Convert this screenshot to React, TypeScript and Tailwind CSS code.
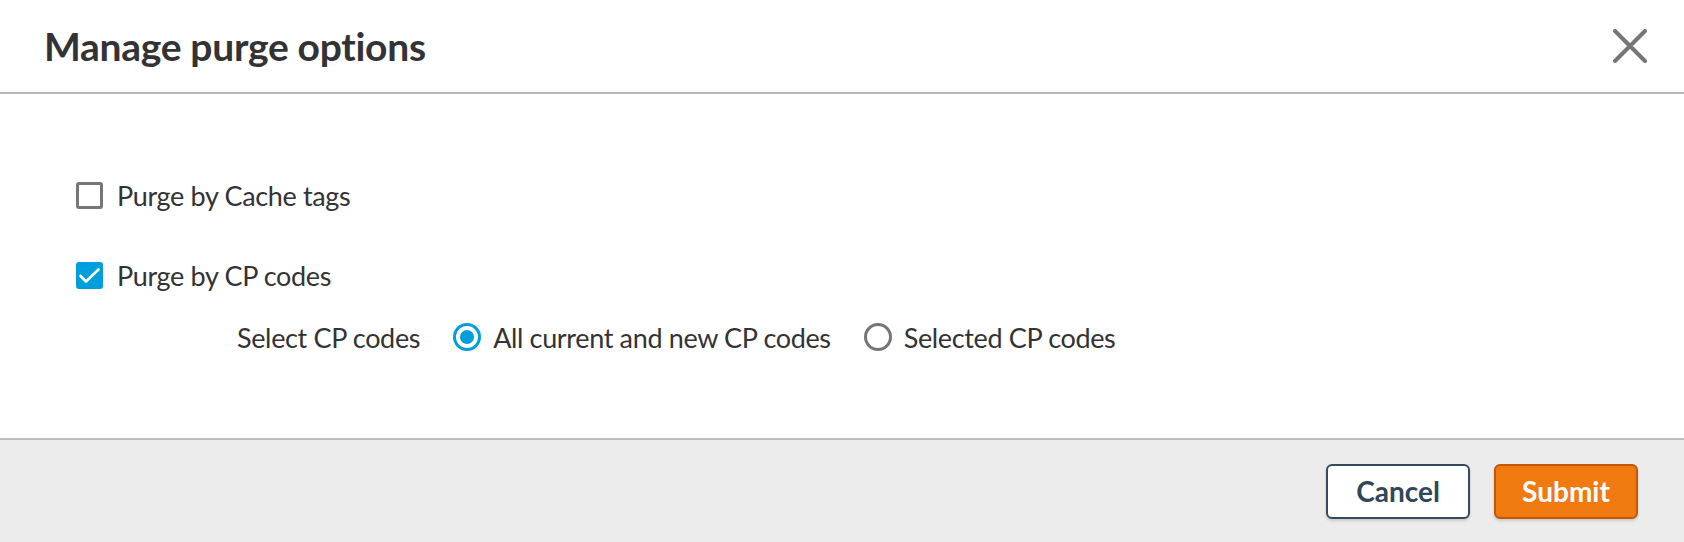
import React from "react";

const font = { fontFamily: '"Lato", "Open Sans", sans-serif' };

function CheckBox({ checked }: { checked: boolean }) {
  if (checked) {
    return (
      <span className="block h-[27px] w-[27px] rounded-[3px] bg-[#009fdb]">
        <svg width="27" height="27" viewBox="0 0 27 27" fill="none">
          <path d="M4.5 14 L10 19.5 L22.5 7.5" stroke="white" strokeWidth="2.6" strokeLinecap="round" strokeLinejoin="round" />
        </svg>
      </span>
    );
  }
  return <span className="block h-[27px] w-[27px] rounded-[3px] border-[3px] border-[#767676] bg-white" />;
}

function Radio({ checked }: { checked: boolean }) {
  return checked ? (
    <span className="flex h-[28px] w-[28px] items-center justify-center rounded-full border-[3px] border-[#009fdb]">
      <span className="block h-[14px] w-[14px] rounded-full bg-[#009fdb]" />
    </span>
  ) : (
    <span className="block h-[28px] w-[28px] rounded-full border-[3px] border-[#767676]" />
  );
}

export default function App() {
  return (
    <div className="flex h-[542px] w-full flex-col bg-white text-[#333336]" style={font}>
      <div className="flex h-[94px] items-center justify-between border-b-2 border-[#b8b8b8] pl-[44px] pr-[36px]">
        <h1 className="text-[39px] font-bold leading-none tracking-[-0.3px] text-[#333336]">Manage purge options</h1>
        <svg width="36" height="34" viewBox="0 0 36 34" fill="none">
          <path d="M3 2 L33 32 M33 2 L3 32" stroke="#767676" strokeWidth="4" strokeLinecap="round" />
        </svg>
      </div>

      <div className="flex flex-1 flex-col pl-[76px] pt-[88px] text-[27px] leading-none tracking-[-0.35px]">
        <label className="flex h-[27px] items-center gap-[14px]">
          <CheckBox checked={false} />
          <span>Purge by Cache tags</span>
        </label>
        <label className="mt-[53px] flex h-[27px] items-center gap-[14px]">
          <CheckBox checked={true} />
          <span>Purge by CP codes</span>
        </label>
        <div className="ml-[161px] mt-[34px] flex h-[28px] items-center">
          <span className="mr-[33px]">Select CP codes</span>
          <label className="flex items-center gap-[12px]">
            <Radio checked={true} />
            <span>All current and new CP codes</span>
          </label>
          <label className="ml-[33px] flex items-center gap-[12px]">
            <Radio checked={false} />
            <span>Selected CP codes</span>
          </label>
        </div>
      </div>

      <div className="flex h-[104px] items-center justify-end gap-[24px] border-t-2 border-[#bdbdbd] bg-[#ececec] pr-[46px]">
        <button className="h-[55px] w-[144px] rounded-[6px] border-2 border-[#344a5e] bg-white text-[28px] font-bold text-[#2f4759] shadow-[0_2px_3px_rgba(0,0,0,0.15)]">
          Cancel
        </button>
        <button className="h-[55px] w-[144px] rounded-[6px] border-2 border-[#c0580a] bg-[#f07a10] text-[28px] font-bold text-white shadow-[0_2px_3px_rgba(0,0,0,0.15)]">
          Submit
        </button>
      </div>
    </div>
  );
}
